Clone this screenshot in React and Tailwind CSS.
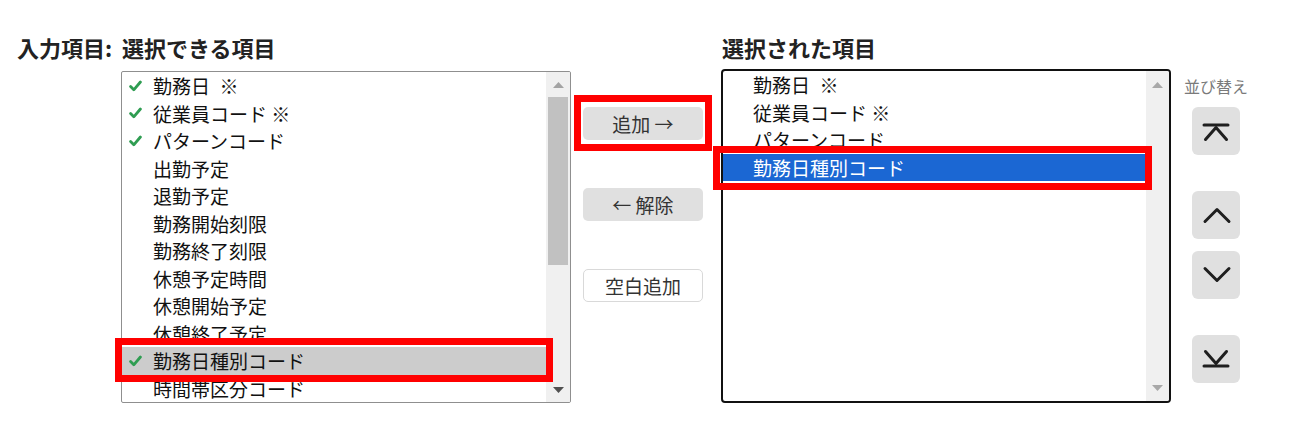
import React from "react";

const FONT = { fontFamily: '"Noto Sans CJK JP", "Noto Sans", sans-serif' };

const leftItems = [
  { t: "勤務日\u2002※", c: true },
  { t: "従業員コード ※", c: true },
  { t: "パターンコード", c: true },
  { t: "出勤予定" },
  { t: "退勤予定" },
  { t: "勤務開始刻限" },
  { t: "勤務終了刻限" },
  { t: "休憩予定時間" },
  { t: "休憩開始予定" },
  { t: "休憩終了予定" },
  { t: "勤務日種別コード", c: true, sel: true },
  { t: "時間帯区分コード" },
];

const rightItems = [
  { t: "勤務日\u2002※" },
  { t: "従業員コード ※" },
  { t: "パターンコード" },
  { t: "勤務日種別コード", sel: true },
];

function Check() {
  return (
    <svg width="13" height="12" viewBox="0 0 13 12">
      <path d="M1.6 6.6 L4.8 9.8 L11.4 2" fill="none" stroke="#2f9d52" strokeWidth="2.8" strokeLinecap="round" strokeLinejoin="round" />
    </svg>
  );
}

function Tri({ up, color }) {
  return (
    <svg width="11" height="6" viewBox="0 0 11 6">
      {up ? <path d="M0 6 L5.5 0 L11 6 Z" fill={color} /> : <path d="M0 0 L5.5 6 L11 0 Z" fill={color} />}
    </svg>
  );
}

function SortBtn({ children }) {
  return (
    <button className="w-[48px] h-[48px] rounded-[6px] bg-[#e0e0e0] flex items-center justify-center">
      <svg width="48" height="48" viewBox="0 0 48 48" fill="none" stroke="#1f1f1f" strokeWidth="3" strokeLinecap="round" strokeLinejoin="round">
        {children}
      </svg>
    </button>
  );
}

export default function App() {
  return (
    <div className="w-[1294px] h-[445px] bg-white overflow-hidden" style={FONT}>
      <div className="flex items-start pt-[34px] pl-[17px]">
        {/* label column */}
        <div className="w-[104px] h-[26px] text-[22px] leading-[26px] font-bold text-[#222]">入力項目:</div>

        {/* left column */}
        <div className="w-[450px] flex flex-col">
          <div className="h-[26px] text-[22px] leading-[26px] font-bold text-[#222] pl-[1px]">選択できる項目</div>
          <div className="relative mt-[11px]">
            <div className="w-[450px] h-[332px] border border-[#8f8f8f] rounded-[2px] flex overflow-hidden bg-white">
              <div className="flex-1 flex flex-col overflow-hidden">
                {leftItems.map((it, i) => (
                  <div
                    key={i}
                    className={`h-[27.5px] shrink-0 flex items-center text-[19px] leading-[27.5px] text-[#111] whitespace-pre ${it.sel ? "bg-[#cccccc]" : ""}`}
                  >
                    <div className="w-[31px] shrink-0 pl-[7px] flex items-center">{it.c ? <Check /> : null}</div>
                    <span>{it.t}</span>
                  </div>
                ))}
              </div>
              <div className="w-[24px] shrink-0 bg-[#f0f0f0] flex flex-col">
                <div className="h-[25px] flex items-center justify-center">
                  <Tri up color="#a3a3a3" />
                </div>
                <div className="h-[168px] mx-[2px] bg-[#c1c1c1]"></div>
                <div className="flex-1"></div>
                <div className="h-[25px] flex items-center justify-center">
                  <Tri color="#505050" />
                </div>
              </div>
            </div>
            <div className="absolute left-[-6px] top-[267px] w-[438px] h-[44px] border-[7px] border-[#ff0000]"></div>
          </div>
        </div>

        {/* middle column */}
        <div className="w-[150px] flex flex-col pl-[12px] pt-[73px]">
          <div className="relative">
            <button className="w-[120px] h-[33px] rounded-[5px] bg-[#e0e0e0] text-[19px] leading-[33px] text-[#333] whitespace-pre">追加 →</button>
            <div className="absolute left-[-9px] top-[-12px] w-[138px] h-[56px] border-[7px] border-[#ff0000]"></div>
          </div>
          <button className="mt-[48px] w-[120px] h-[33px] rounded-[5px] bg-[#e0e0e0] text-[19px] leading-[33px] text-[#333] whitespace-pre">← 解除</button>
          <button className="mt-[48px] w-[120px] h-[33px] rounded-[5px] bg-white border border-[#d9d9d9] text-[19px] leading-[31px] text-[#333]">空白追加</button>
        </div>

        {/* right column */}
        <div className="w-[450px] flex flex-col">
          <div className="h-[26px] text-[22px] leading-[26px] font-bold text-[#222] pl-[1px]">選択された項目</div>
          <div className="relative mt-[9px]">
            <div className="w-[450px] h-[334px] border-2 border-[#111] rounded-[4px] flex overflow-hidden bg-white">
              <div className="flex-1 flex flex-col overflow-hidden">
                {rightItems.map((it, i) => (
                  <div
                    key={i}
                    className={`h-[27.5px] shrink-0 flex items-center pl-[30px] text-[19px] leading-[27.5px] whitespace-pre ${it.sel ? "bg-[#1b67d3] text-white" : "text-[#111]"}`}
                  >
                    {it.t}
                  </div>
                ))}
              </div>
              <div className="w-[23px] shrink-0 bg-[#f0f0f0] flex flex-col justify-between">
                <div className="h-[28px] flex items-center justify-center">
                  <Tri up color="#a8a8a8" />
                </div>
                <div className="h-[27px] flex items-center justify-center">
                  <Tri color="#a8a8a8" />
                </div>
              </div>
            </div>
            <div className="absolute left-[-8px] top-[77px] w-[439px] h-[44px] border-[7px] border-[#ff0000]"></div>
          </div>
        </div>

        {/* sort column */}
        <div className="ml-[13px] flex flex-col pt-[42px]">
          <div className="h-[20px] text-[16px] leading-[20px] text-[#7a7a7a] whitespace-nowrap">並び替え</div>
          <div className="ml-[8px] mt-[11px] flex flex-col">
            <SortBtn>
              <path d="M12 18 L36 18" />
              <path d="M13.5 32.5 L24 20.5 L34.5 32.5" />
            </SortBtn>
            <div className="mt-[36px]">
              <SortBtn>
                <path d="M13 30.5 L25 18.5 L37 30.5" />
              </SortBtn>
            </div>
            <div className="mt-[12px]">
              <SortBtn>
                <path d="M13 17.5 L25 29.5 L37 17.5" />
              </SortBtn>
            </div>
            <div className="mt-[36px]">
              <SortBtn>
                <path d="M13.5 16.5 L24 28.5 L34.5 16.5" />
                <path d="M12 31 L36 31" />
              </SortBtn>
            </div>
          </div>
        </div>
      </div>
    </div>
  );
}
